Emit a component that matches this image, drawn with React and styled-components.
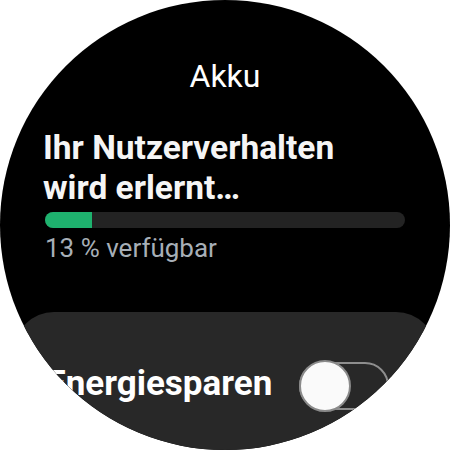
import React from "react";
import styled, { createGlobalStyle } from "styled-components";

const GlobalStyle = createGlobalStyle`
  html, body {
    margin: 0;
    padding: 0;
    background: #ffffff;
  }
  body {
    font-family: Roboto, "Noto Sans", "Liberation Sans", sans-serif;
  }
`;

const Watch = styled.div`
  width: 450px;
  height: 450px;
  border-radius: 50%;
  background: #000000;
  overflow: hidden;
  display: flex;
  flex-direction: column;
  padding-top: 57px;
  box-sizing: border-box;
`;

const Title = styled.h1`
  margin: 0;
  font-size: 32px;
  line-height: 38px;
  font-weight: 400;
  color: #ffffff;
  text-align: center;
`;

const Content = styled.div`
  padding: 0 45px;
  display: flex;
  flex-direction: column;
`;

const Heading = styled.h2`
  margin: 33px 0 0 -2px;
  font-size: 33.5px;
  line-height: 40px;
  font-weight: 700;
  color: #f5f5f5;
`;

const Track = styled.div`
  margin-top: 4px;
  height: 16px;
  border-radius: 8px;
  background: #232323;
  overflow: hidden;
`;

const Fill = styled.div`
  height: 100%;
  background: #1eb26e;
`;

const Caption = styled.p`
  margin: 5px 0 0;
  font-size: 26px;
  line-height: 30px;
  color: #a7afb7;
`;

const Card = styled.div`
  margin: 49px 14px 0;
  flex: 1;
  border-radius: 40px 40px 0 0;
  background: #282828;
  padding: 48px 0 0 32px;
`;

const Row = styled.div`
  display: flex;
  align-items: center;
  gap: 27px;
  height: 52px;
`;

const Label = styled.span`
  margin-bottom: 4px;
  font-size: 35px;
  line-height: 44px;
  font-weight: 700;
  color: #ffffff;
  white-space: nowrap;
`;

const Switch = styled.div`
  position: relative;
  flex: none;
  width: 90px;
  height: 48px;
  box-sizing: border-box;
  border: 2px solid #8e8e8e;
  border-radius: 24px;
`;

const Thumb = styled.div`
  position: absolute;
  left: -2px;
  top: -4px;
  width: 52px;
  height: 52px;
  box-sizing: border-box;
  border-radius: 50%;
  background: #fafafa;
  border: 2px solid #8a8a8a;
`;

const App = () => {
  const level = 13;
  return (
    <>
      <GlobalStyle />
      <Watch>
        <Title>Akku</Title>
        <Content>
          <Heading>
            Ihr Nutzerverhalten
            <br />
            wird erlernt…
          </Heading>
          <Track>
            <Fill style={{ width: `${level}%` }} />
          </Track>
          <Caption>{level} % verfügbar</Caption>
        </Content>
        <Card>
          <Row>
            <Label>Energiesparen</Label>
            <Switch>
              <Thumb />
            </Switch>
          </Row>
        </Card>
      </Watch>
    </>
  );
};

export default App;
